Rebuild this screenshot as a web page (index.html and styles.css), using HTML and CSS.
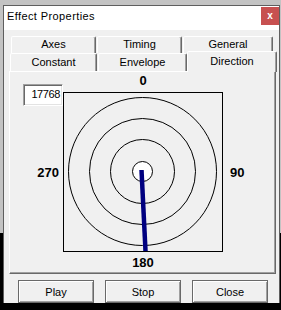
FILE: index.html
```html
<!DOCTYPE html>
<html lang="en">
<head>
    <meta charset="UTF-8">
    <title>Effect Properties</title>
    <link rel="stylesheet" href="styles.css">
</head>
<body>
    <div class="window">
        <div class="titlebar">
            <span class="title">Effect Properties</span>
            <span class="close">x</span>
        </div>

        <div class="tabs">
            <div class="tab-row back">
                <div class="tab" style="width: 85px">Axes</div>
                <div class="tab" style="width: 85px">Timing</div>
                <div class="tab" style="width: 90px">General</div>
            </div>
            <div class="tab-row front">
                <div class="tab" style="width: 87px">Constant</div>
                <div class="tab" style="width: 89px">Envelope</div>
                <div class="tab active" style="width: 90px">Direction</div>
            </div>
        </div>

        <div class="panel">
            <div class="dir-grid">
                <div class="angle">17768</div>
                <div class="lbl top">0</div>
                <div class="lbl left">270</div>
                <svg class="compass" width="160" height="160" viewBox="0 0 160 160">
                    <rect x="0.5" y="0.5" width="159" height="159" fill="none" stroke="#000"/>
                    <circle cx="79.5" cy="79.5" r="74" fill="none" stroke="#000"/>
                    <circle cx="79.5" cy="79.5" r="53" fill="none" stroke="#000"/>
                    <circle cx="79.5" cy="79.5" r="32" fill="none" stroke="#000"/>
                    <circle cx="79.5" cy="79.5" r="10" fill="#fff" stroke="#000"/>
                    <line x1="78.5" y1="78" x2="82.5" y2="159" stroke="#000080" stroke-width="4.5"/>
                </svg>
                <div class="lbl right">90</div>
                <div class="lbl bottom">180</div>
            </div>
        </div>

        <div class="buttons">
            <button class="btn">Play</button>
            <button class="btn">Stop</button>
            <button class="btn">Close</button>
        </div>
    </div>
</body>
</html>
```

FILE: styles.css
```css
body {
    margin: 0;
    height: 310px;
    overflow: hidden;
    background: linear-gradient(#c3c3c3 0, #c3c3c3 233px, #000 233px);
    font-family: "Liberation Sans", Arial, sans-serif;
    font-size: 11px;
    color: #000;
}
.window {
    margin: 5px 0 0 3px;
    width: 277px;
    height: 298px;
    box-sizing: border-box;
    border: 1px solid #5e5e5e;
    border-bottom: 0;
    background: #f0f0f0;
}
.titlebar {
    display: flex;
    justify-content: space-between;
    align-items: flex-start;
    height: 24px;
    background: #fff;
}
.title {
    padding: 4px 0 0 3px;
    line-height: 13px;
    letter-spacing: 0.4px;
}
.close {
    width: 18px;
    height: 18px;
    margin-top: 1px;
    background: #c75050;
    color: #fff;
    font-weight: bold;
    font-size: 10px;
    line-height: 17px;
    text-align: center;
}

/* tabs */
.tabs {
    padding-top: 6px;
}
.tab-row {
    display: flex;
    gap: 1px;
}
.tab-row.back {
    padding-left: 7px;
    height: 17px;
}
.tab-row.front {
    padding-left: 6px;
    height: 18px;
    align-items: flex-end;
}
.tab {
    box-sizing: border-box;
    height: 100%;
    border: 1px solid;
    border-bottom: 0;
    border-color: #fff #696969 transparent #fff;
    border-radius: 2px 2px 0 0;
    box-shadow: inset -1px 0 #a0a0a0;
    background: #f0f0f0;
    text-align: center;
    line-height: 13px;
    padding-top: 2px;
}
.back .tab {
    padding-top: 1px;
}
.tab.active {
    position: relative;
    z-index: 1;
    height: 21px;
    margin-bottom: -1px;
    margin-left: -1px;
    padding-top: 3px;
}

/* direction page */
.panel {
    margin-left: 5px;
    width: 267px;
    height: 203px;
    box-sizing: border-box;
    border: 1px solid;
    border-color: #fff #696969 #696969 #fff;
    box-shadow: inset -1px -1px #a0a0a0;
}
.dir-grid {
    display: grid;
    grid-template-columns: 53px 160px 1fr;
    grid-template-rows: 20px 160px 1fr;
    height: 100%;
}
.angle {
    grid-column: 1;
    grid-row: 1 / 3;
    align-self: start;
    justify-self: start;
    margin: 12px 0 0 13px;
    width: 40px;
    height: 22px;
    box-sizing: border-box;
    border: 1px solid;
    border-color: #a0a0a0 #fff #fff #a0a0a0;
    box-shadow: inset 1px 1px #696969, inset -1px -1px #e3e3e3;
    background: #fff;
    text-align: right;
    padding-right: 2px;
    line-height: 18px;
    letter-spacing: -0.4px;
}
.compass {
    grid-column: 2;
    grid-row: 2;
    display: block;
}
.lbl {
    font-weight: bold;
    font-size: 13px;
    line-height: 15px;
}
.top {
    grid-column: 2;
    grid-row: 1;
    text-align: center;
    padding-top: 1px;
}
.left {
    grid-column: 1;
    grid-row: 2;
    align-self: center;
    text-align: right;
    padding-right: 4px;
}
.right {
    grid-column: 3;
    grid-row: 2;
    align-self: center;
    padding-left: 7px;
}
.bottom {
    grid-column: 2;
    grid-row: 3;
    text-align: center;
    padding-top: 3px;
}

/* buttons */
.buttons {
    display: flex;
    gap: 11px;
    padding: 6px 0 0 14px;
}
.btn {
    width: 76px;
    height: 23px;
    padding: 0;
    border: 1px solid #696969;
    box-shadow: inset 1px 1px #fff, inset -1px -1px #a0a0a0;
    background: #f0f0f0;
    font-family: "Liberation Sans", Arial, sans-serif;
    font-size: 11px;
    color: #000;
}
```
